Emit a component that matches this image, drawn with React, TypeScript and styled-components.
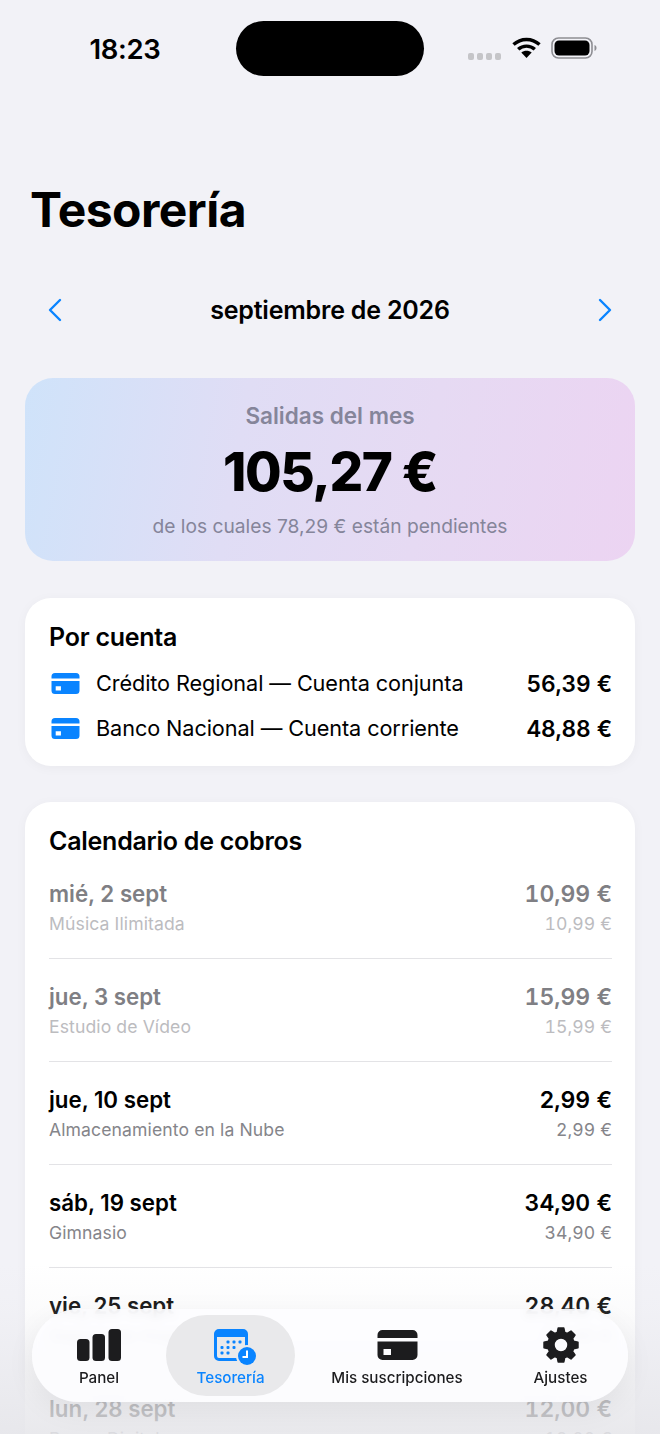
import styled, { createGlobalStyle } from "styled-components";

const GlobalStyle = createGlobalStyle`
  html, body {
    margin: 0;
    padding: 0;
    background: #f2f2f7;
  }
  body {
    font-family: Inter, "Liberation Sans", sans-serif;
    color: #000;
  }
`;

const Screen = styled.div`
  position: relative;
  width: 660px;
  height: 1434px;
  overflow: hidden;
  background: #f2f2f7;
`;

const StatusBar = styled.div`
  display: flex;
  align-items: center;
  height: 55px;
  margin-top: 21px;
`;

const Clock = styled.div`
  width: 236px;
  text-align: center;
  padding-left: 14px;
  box-sizing: border-box;
  font-size: 27.5px;
  font-weight: 600;
  letter-spacing: -0.3px;
`;

const Island = styled.div`
  width: 188px;
  height: 55px;
  border-radius: 28px;
  background: #000;
`;

const StatusIcons = styled.div`
  display: flex;
  align-items: center;
  gap: 10px;
  padding-left: 44px;
`;

const Title = styled.h1`
  margin: 104px 0 0 30px;
  font-size: 48px;
  line-height: 60px;
  font-weight: 700;
  letter-spacing: -0.55px;
`;

const MonthRow = styled.div`
  display: flex;
  align-items: center;
  justify-content: space-between;
  margin-top: 53px;
  padding: 0 48px;
  height: 34px;
  color: #0a84ff;
`;

const MonthLabel = styled.div`
  font-size: 25px;
  font-weight: 600;
  letter-spacing: -0.2px;
  color: #000;
`;

const Hero = styled.section`
  margin: 51px 25px 37px;
  height: 183px;
  box-sizing: border-box;
  padding-top: 24px;
  border-radius: 28px;
  text-align: center;
  background: linear-gradient(100deg, #cfe3fa 0%, #e0ddf5 35%, #e6daf3 65%, #ecd4f2 100%);
`;

const HeroLabel = styled.div`
  font-size: 22.5px;
  line-height: 28px;
  font-weight: 600;
  color: #85859a;
`;

const HeroAmount = styled.div`
  margin-top: 12px;
  font-size: 53px;
  line-height: 60px;
  font-weight: 800;
  letter-spacing: -1.4px;
`;

const HeroNote = styled.div`
  margin-top: 11px;
  font-size: 19.2px;
  line-height: 26px;
  color: #85859a;
`;

const Card = styled.section`
  margin: 36px 25px 0;
  padding: 24px 23px 0 24px;
  background: #fff;
  border-radius: 26px;
  box-shadow: 0 2px 12px rgba(0, 0, 0, 0.04);
`;

const CardTitle = styled.h2`
  margin: 0;
  font-size: 25px;
  line-height: 30px;
  font-weight: 600;
  letter-spacing: -0.25px;
`;

const AccountList = styled.div`
  display: flex;
  flex-direction: column;
  gap: 15px;
  padding: 16px 0 23px;
`;

const AccountRow = styled.div`
  display: flex;
  align-items: center;
  height: 30px;
  font-size: 21.7px;
  letter-spacing: -0.1px;
`;

const AccountIcon = styled.span`
  display: flex;
  margin-left: 2px;
  color: #0a84ff;
`;

const AccountName = styled.span`
  flex: 1;
  margin-left: 16px;
`;

const AccountAmount = styled.span`
  font-size: 22.7px;
  font-weight: 600;
  font-variant-numeric: tabular-nums;
`;

const ChargeRow = styled.div<{ $last?: boolean }>`
  display: grid;
  grid-template-columns: 1fr auto;
  align-items: center;
  row-gap: 5px;
  padding: 25px 0 23px;
  border-bottom: ${(p) => (p.$last ? "none" : "1px solid #e3e3e6")};
`;

const ChargeDate = styled.div<{ $paid?: boolean }>`
  font-size: 22.3px;
  line-height: 26px;
  font-weight: 600;
  color: ${(p) => (p.$paid ? "#7f7f84" : "#000")};
`;

const ChargeAmount = styled(ChargeDate)`
  font-size: 23px;
  text-align: right;
  font-variant-numeric: tabular-nums;
`;

const ChargeSub = styled.div<{ $paid?: boolean }>`
  font-size: 17.6px;
  line-height: 23px;
  letter-spacing: 0.1px;
  color: ${(p) => (p.$paid ? "#bcbcbf" : "#85858a")};
`;

const ChargeSubAmount = styled(ChargeSub)`
  text-align: right;
  font-variant-numeric: tabular-nums;
`;

const BottomFade = styled.div`
  position: absolute;
  left: 0;
  right: 0;
  bottom: 0;
  height: 170px;
  pointer-events: none;
  background: linear-gradient(
    to bottom,
    rgba(232, 232, 236, 0) 0%,
    rgba(232, 232, 236, 0.15) 27%,
    rgba(232, 232, 236, 0.8) 80%,
    rgba(230, 230, 234, 0.88) 100%
  );
`;

const TabBar = styled.nav`
  position: absolute;
  left: 32px;
  top: 1309px;
  width: 596px;
  height: 93px;
  box-sizing: border-box;
  padding: 6px;
  display: grid;
  grid-template-columns: 128px 129px 204px 123px;
  border-radius: 47px;
  background: rgba(253, 253, 255, 0.9);
  backdrop-filter: blur(5px);
  box-shadow: 0 8px 30px rgba(0, 0, 0, 0.06);
`;

const Tab = styled.div<{ $active?: boolean; $shift?: boolean }>`
  display: flex;
  flex-direction: column;
  align-items: center;
  height: 81px;
  box-sizing: border-box;
  padding-top: 13px;
  margin-right: ${(p) => (p.$shift ? "6px" : "0")};
  border-radius: 41px;
  background: ${(p) => (p.$active ? "#e9e9eb" : "transparent")};
  color: ${(p) => (p.$active ? "#0a84ff" : "#1c1c1e")};
`;

const TabIcon = styled.div`
  display: flex;
  align-items: center;
  height: 34px;

  svg {
    overflow: visible;
  }
`;

const TabLabel = styled.span`
  margin-top: 6px;
  font-size: 15.2px;
  line-height: 20px;
  font-weight: 500;
  white-space: nowrap;
`;

// 8 dientes, como el engranaje de iOS
const gearPath = () => {
  const cx = 18;
  const cy = 17;
  const teeth = 8;
  let d = "";
  for (let i = 0; i < teeth; i++) {
    const a = (i / teeth) * Math.PI * 2 - Math.PI / 2;
    const w = Math.PI / teeth;
    const pts: [number, number][] = [
      [13.2, a - w * 0.72],
      [17.2, a - w * 0.42],
      [17.2, a + w * 0.42],
      [13.2, a + w * 0.72],
    ];
    pts.forEach(([r, t], j) => {
      const x = (cx + r * Math.cos(t)).toFixed(2);
      const y = (cy + r * Math.sin(t)).toFixed(2);
      d += `${i === 0 && j === 0 ? "M" : "L"}${x} ${y} `;
    });
  }
  return `${d}Z M${cx + 7} ${cy} A7 7 0 1 0 ${cx - 7} ${cy} A7 7 0 1 0 ${cx + 7} ${cy} Z`;
};

const CardIcon = ({ width, height }: { width: number; height: number }) => (
  <svg width={width} height={height} viewBox="0 0 40 30" fill="currentColor">
    <path
      fillRule="evenodd"
      d="M5 0h30a5 5 0 0 1 5 5v3H0V5a5 5 0 0 1 5-5zM0 11.5h40V25a5 5 0 0 1-5 5H5a5 5 0 0 1-5-5zm6 7.5v6h7.5v-6z"
    />
  </svg>
);

const Chevron = ({ flip }: { flip?: boolean }) => (
  <svg width="14" height="24" viewBox="0 0 14 24" fill="none">
    <path
      d={flip ? "M2 2l10 10L2 22" : "M12 2L2 12l10 10"}
      stroke="currentColor"
      strokeWidth="2.4"
      strokeLinecap="round"
      strokeLinejoin="round"
    />
  </svg>
);

const accounts = [
  { name: "Crédito Regional — Cuenta conjunta", amount: "56,39 €" },
  { name: "Banco Nacional — Cuenta corriente", amount: "48,88 €" },
];

const charges = [
  { date: "mié, 2 sept", name: "Música Ilimitada", amount: "10,99 €", paid: true },
  { date: "jue, 3 sept", name: "Estudio de Vídeo", amount: "15,99 €", paid: true },
  { date: "jue, 10 sept", name: "Almacenamiento en la Nube", amount: "2,99 €" },
  { date: "sáb, 19 sept", name: "Gimnasio", amount: "34,90 €" },
  { date: "vie, 25 sept", name: "Seguro de Hogar", amount: "28,40 €" },
  { date: "lun, 28 sept", name: "Banco Digital", amount: "12,00 €" },
];

const App = () => {
  return (
    <Screen>
      <GlobalStyle />
      <StatusBar>
        <Clock>18:23</Clock>
        <Island />
        <StatusIcons>
          <svg width="34" height="8" viewBox="0 0 34 8" fill="#c5c5c8" style={{ marginTop: 14 }}>
            <rect x="0" y="1" width="6" height="7" rx="2" />
            <rect x="9" y="1" width="6" height="7" rx="2" />
            <rect x="18" y="1" width="6" height="7" rx="2" />
            <rect x="27" y="1" width="6" height="7" rx="2" />
          </svg>
          <svg width="29" height="21" viewBox="0 0 29 21" style={{ marginTop: -2 }}>
            <path
              fill="none"
              stroke="#000"
              strokeWidth="3.4"
              d="M1.5 7.6C8.8 .7 20.2 .7 27.5 7.6M6.2 12.3c4.6-4.3 12-4.3 16.6 0"
            />
            <path d="M14.5 21l-5.2-5.4c2.9-2.4 7.5-2.4 10.4 0z" fill="#000" />
          </svg>
          <svg width="46" height="22" viewBox="0 0 46 22" style={{ marginTop: -2 }}>
            <rect x="1" y="1" width="40" height="20" rx="6.5" fill="none" stroke="#8e8e93" strokeWidth="1.6" />
            <rect x="3.5" y="3.5" width="35" height="15" rx="4.5" fill="#000" />
            <path d="M43.5 8v6c1.3-.4 2-1.6 2-3s-.7-2.6-2-3z" fill="#8e8e93" />
          </svg>
        </StatusIcons>
      </StatusBar>

      <Title>Tesorería</Title>

      <MonthRow>
        <Chevron />
        <MonthLabel>septiembre de 2026</MonthLabel>
        <Chevron flip />
      </MonthRow>

      <Hero>
        <HeroLabel>Salidas del mes</HeroLabel>
        <HeroAmount>105,27 €</HeroAmount>
        <HeroNote>de los cuales 78,29 € están pendientes</HeroNote>
      </Hero>

      <Card>
        <CardTitle>Por cuenta</CardTitle>
        <AccountList>
          {accounts.map((a) => (
            <AccountRow key={a.name}>
              <AccountIcon>
                <CardIcon width={29} height={21} />
              </AccountIcon>
              <AccountName>{a.name}</AccountName>
              <AccountAmount>{a.amount}</AccountAmount>
            </AccountRow>
          ))}
        </AccountList>
      </Card>

      <Card>
        <CardTitle>Calendario de cobros</CardTitle>
        {charges.map((c, i) => (
          <ChargeRow key={c.date} $last={i === charges.length - 1}>
            <ChargeDate $paid={c.paid}>{c.date}</ChargeDate>
            <ChargeAmount $paid={c.paid}>{c.amount}</ChargeAmount>
            <ChargeSub $paid={c.paid}>{c.name}</ChargeSub>
            <ChargeSubAmount $paid={c.paid}>{c.amount}</ChargeSubAmount>
          </ChargeRow>
        ))}
      </Card>

      <BottomFade />

      <TabBar>
        <Tab $shift>
          <TabIcon>
            <svg width="44" height="34" viewBox="0 0 44 34" fill="currentColor">
              <rect x="0" y="11" width="12.5" height="22" rx="3.5" />
              <rect x="15.5" y="6" width="12.5" height="27" rx="3.5" />
              <rect x="31.5" y="1" width="12.5" height="32" rx="3.5" />
            </svg>
          </TabIcon>
          <TabLabel>Panel</TabLabel>
        </Tab>
        <Tab $active>
          <TabIcon>
            <svg width="44" height="34" viewBox="0 0 44 34">
              <path
                fill="currentColor"
                fillRule="evenodd"
                d="M10 1h24a5 5 0 0 1 5 5v22a5 5 0 0 1-5 5H10a5 5 0 0 1-5-5V6a5 5 0 0 1 5-5zM8 9v19a2 2 0 0 0 2 2h24a2 2 0 0 0 2-2V9z"
              />
              <g fill="currentColor">
                <rect x="17.5" y="12.5" width="3" height="3" rx="1" />
                <rect x="23.5" y="12.5" width="3" height="3" rx="1" />
                <rect x="29.5" y="12.5" width="3" height="3" rx="1" />
                <rect x="11.5" y="18" width="3" height="3" rx="1" />
                <rect x="17.5" y="18" width="3" height="3" rx="1" />
                <rect x="23.5" y="18" width="3" height="3" rx="1" />
                <rect x="11.5" y="23.5" width="3" height="3" rx="1" />
                <rect x="17.5" y="23.5" width="3" height="3" rx="1" />
              </g>
              <circle cx="38" cy="28" r="11" fill="#e9e9eb" />
              <circle cx="38" cy="28" r="9" fill="currentColor" />
              <path d="M38 22.5V29h-4.5" fill="none" stroke="#fff" strokeWidth="2" />
            </svg>
          </TabIcon>
          <TabLabel>Tesorería</TabLabel>
        </Tab>
        <Tab>
          <TabIcon>
            <CardIcon width={41} height={30} />
          </TabIcon>
          <TabLabel>Mis suscripciones</TabLabel>
        </Tab>
        <Tab>
          <TabIcon>
            <svg width="36" height="34" viewBox="0 0 36 34" fill="currentColor">
              <path fillRule="evenodd" d={gearPath()} stroke="currentColor" strokeWidth="1.5" strokeLinejoin="round" />
            </svg>
          </TabIcon>
          <TabLabel>Ajustes</TabLabel>
        </Tab>
      </TabBar>
    </Screen>
  );
};

export default App;
